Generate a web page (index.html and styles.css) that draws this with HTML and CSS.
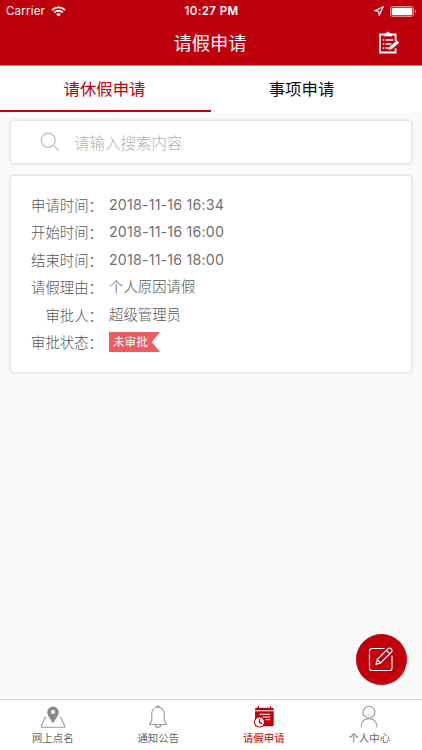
FILE: index.html
```html
<!DOCTYPE html>
<html lang="zh-CN">
<head>
    <meta charset="UTF-8">
    <meta name="viewport" content="width=device-width, initial-scale=1.0">
    <title>请假申请</title>
    <link rel="stylesheet" href="styles.css">
</head>
<body>
    <header class="header">
        <div class="status-bar">
            <div class="status-left">
                <span class="carrier">Carrier</span>
                <svg class="wifi" width="15" height="11" viewBox="0 0 15 11" fill="none" stroke="#fff" stroke-width="1.9">
                    <path d="M1 4.1a9.2 9.2 0 0 1 13 0M3.3 6.5a6 6 0 0 1 8.4 0"/>
                    <path d="M7.5 10.6L5.2 8.3a3.3 3.3 0 0 1 4.6 0z" fill="#fff" stroke="none"/>
                </svg>
            </div>
            <div class="status-time">10:27 PM</div>
            <div class="status-right">
                <svg width="10" height="10" viewBox="0 0 10 10" fill="none" stroke="#fff" stroke-width="1.2" stroke-linejoin="round">
                    <path d="M9.2.8L.8 4.7l3.9.6.5 3.9z"/>
                </svg>
                <svg width="27" height="11" viewBox="0 0 27 11">
                    <rect x=".5" y=".5" width="23" height="10" rx="2.4" fill="none" stroke="#e28a8e"/>
                    <rect x="1.7" y="1.7" width="20.6" height="7.6" rx="1.2" fill="#fff"/>
                    <path d="M25 3.7c1.6.6 1.6 3 0 3.6z" fill="#e28a8e"/>
                </svg>
            </div>
        </div>
        <div class="title-bar">
            <h1>请假申请</h1>
            <svg class="title-icon" width="22" height="24" viewBox="0 0 22 24" fill="none" stroke="#fff" stroke-width="1.8">
                <path d="M17.6 10V3.5H2v18h15.6v-4"/>
                <path d="M5.6 5.3V2.6h2.3c.2-2.6 3.7-2.6 3.9 0h2.3v2.7z" fill="#fff" stroke="none"/>
                <path d="M4.7 9h1.6M7.6 9h7.6M4.7 13h1.6M7.6 13h5.7M4.7 17h1.6M7.6 17h3.2" stroke-width="1.6"/>
                <path d="M10.8 18.8l1-3.2 7.3-6.1 2 2.2-7.2 6.2z" fill="#fff" stroke="none"/>
            </svg>
        </div>
    </header>

    <div class="tabs">
        <div class="tab active">请休假申请</div>
        <div class="tab">事项申请</div>
    </div>

    <main class="content">
        <div class="search">
            <svg width="20" height="20" viewBox="0 0 20 20" fill="none" stroke="#c4c4c6" stroke-width="1.4" stroke-linecap="round">
                <circle cx="8.2" cy="8.2" r="7"/>
                <path d="M13.3 13.3l5 4.8"/>
            </svg>
            <span>请输入搜索内容</span>
        </div>

        <div class="card">
            <div class="row"><span class="label">申请时间：</span><span class="value date">2018-11-16 16:34</span></div>
            <div class="row"><span class="label">开始时间：</span><span class="value date">2018-11-16 16:00</span></div>
            <div class="row"><span class="label">结束时间：</span><span class="value date">2018-11-16 18:00</span></div>
            <div class="row"><span class="label">请假理由：</span><span class="value">个人原因请假</span></div>
            <div class="row"><span class="label">审批人：</span><span class="value">超级管理员</span></div>
            <div class="row"><span class="label">审批状态：</span><span class="tag">未审批</span></div>
        </div>
    </main>

    <div class="fab">
        <svg width="26" height="26" viewBox="0 0 26 26" fill="none" stroke="#fff" stroke-width="1.2" stroke-linecap="round" stroke-linejoin="round">
            <path d="M16 2.500H4A2.500 2.500 0 0 0 1.500 5V22A2.500 2.500 0 0 0 4 24.500h17.500A2.500 2.500 0 0 0 24 22V10"/>
            <path d="M8 18.300l1.200-4.600L20.300 2.500c2.100-1.500 4.800 1.200 3.300 3.300L12.500 17z"/>
            <path d="M18.500 4.300l3.300 3.300M9.200 13.700l3.300 3.300"/>
        </svg>
    </div>

    <nav class="nav">
        <div class="nav-item">
            <svg width="26" height="24" viewBox="0 0 26 24" fill="none">
                <path d="M6.500 12.500H5L1.300 21c-.3.8 0 1.300.8 1.300h21.800c.8 0 1.100-.5.800-1.300L21 12.500h-1.500" stroke="#999" stroke-width="1.100"/>
                <path d="M13 1.500a5.700 5.700 0 0 0-5.700 5.700c0 4 3.700 6.800 5.700 11.300 2-4.500 5.700-7.300 5.700-11.300A5.700 5.700 0 0 0 13 1.500zm0 3.400a2.100 2.100 0 1 1 0 4.200 2.100 2.100 0 0 1 0-4.200z" fill="#888" fill-rule="evenodd"/>
            </svg>
            <span>网上点名</span>
        </div>
        <div class="nav-item">
            <svg width="20" height="24" viewBox="0 0 20 24" fill="none" stroke="#999" stroke-width="1.100" stroke-linejoin="round">
                <path d="M8.500 2.300a1.500 1.500 0 1 1 3 0M10 2.200c-3.700 0-6.200 2.700-6.200 6.500v6.500c0 1.700-2.300 2.500-2.300 4.300h17c0-1.800-2.300-2.600-2.300-4.300V8.700c0-3.800-2.500-6.500-6.200-6.500zM7.300 19.700a2.700 2.700 0 0 0 5.400 0"/>
            </svg>
            <span>通知公告</span>
        </div>
        <div class="nav-item active">
            <svg width="22" height="24" viewBox="0 0 22 24">
                <path d="M3.500 2.700h15.700a1.500 1.500 0 0 1 1.500 1.500v15.600a1.500 1.500 0 0 1-1.500 1.500H2V4.200a1.500 1.500 0 0 1 1.500-1.500z" fill="#c2000b"/>
                <path d="M5.500 1v4M17.500 1v4" stroke="#c2000b" stroke-width="1.200"/>
                <path d="M2 5.800h18.700M6.500 9.300h10.700M9.500 12h7.700M12.500 14.700h4.700" stroke="#fff" stroke-width="1"/>
                <circle cx="6.500" cy="17" r="5" fill="#fff" stroke="#c2000b" stroke-width="1.100"/>
                <path d="M6.500 14v3.300l2.400 1.300" fill="none" stroke="#c2000b" stroke-width="1.300"/>
            </svg>
            <span>请假申请</span>
        </div>
        <div class="nav-item">
            <svg width="20" height="24" viewBox="0 0 20 24" fill="none" stroke="#999" stroke-width="1.100">
                <circle cx="10" cy="7.200" r="5.900"/>
                <path d="M2 22.500c.2-5.700 3.300-8.700 8-8.700s7.800 3 8 8.700"/>
                <path d="M7 9.500c1.800 1.300 4.200 1.300 6 0" stroke="#ccc" stroke-width=".8"/>
            </svg>
            <span>个人中心</span>
        </div>
    </nav>
</body>
</html>
```
FILE: styles.css
```css
* {
    box-sizing: border-box;
}
body {
    margin: 0;
    height: 750px;
    display: flex;
    flex-direction: column;
    position: relative;
    overflow: hidden;
    background: #fafafa;
    font-family: Inter, "Noto Sans CJK SC", sans-serif;
    font-weight: 300;
}
svg {
    display: block;
    flex: none;
}
.header {
    height: 66px;
    background: #bd000b;
    color: #fff;
    border-bottom: 1px solid #d9777c;
}
.status-bar {
    display: grid;
    grid-template-columns: 1fr auto 1fr;
    align-items: center;
    height: 21px;
    padding: 1px 5px 0 6px;
    font-size: 11.5px;
}
.status-left,
.status-right {
    display: flex;
    align-items: center;
    gap: 6px;
}
.carrier {
    font-weight: 400;
    letter-spacing: 0.2px;
}
.status-right {
    justify-content: flex-end;
}
.status-time {
    font-weight: 600;
    font-size: 11.5px;
    letter-spacing: 0.4px;
}
.title-bar {
    display: grid;
    grid-template-columns: 1fr auto 1fr;
    align-items: center;
    height: 44px;
    padding-right: 22px;
}
.title-bar h1 {
    grid-column: 2;
    margin: 0 -20px 0 0;
    font-size: 18.3px;
    font-weight: 400;
    line-height: 44px;
}
.title-icon {
    justify-self: end;
}
.tabs {
    display: flex;
    height: 46px;
    background: #fff;
}
.tab {
    width: 50%;
    padding-right: 2px;
    text-align: center;
    font-size: 16.4px;
    font-weight: 400;
    line-height: 46px;
    color: #111;
}
.tab:last-child {
    padding-right: 30px;
}
.tab.active {
    color: #bd000b;
    border-bottom: 2px solid #bd000b;
}
.content {
    flex: 1;
    padding: 8px 10px;
}
.search,
.card {
    background: #fff;
    border: 1px solid #e8e8e8;
    border-radius: 4px;
    box-shadow: 0 0 3px rgba(0, 0, 0, 0.14);
}
.search {
    display: flex;
    align-items: center;
    gap: 14px;
    height: 44px;
    padding: 0 0 1px 29px;
    font-size: 15.5px;
    color: #b2b2b6;
}
.card {
    height: 198px;
    margin-top: 11px;
    padding: 16px 20px;
    color: #555;
    font-size: 14.4px;
}
.row {
    display: flex;
    height: 27.4px;
    line-height: 27.4px;
}
.label {
    width: 72px;
    margin-right: 6px;
    text-align: right;
    white-space: nowrap;
}
.value {
    margin-top: -1px;
}
.date {
    font-size: 14.2px;
    font-weight: 400;
    color: #707070;
    letter-spacing: 0.2px;
}
.tag {
    width: 51px;
    height: 20px;
    margin-top: 3px;
    padding-left: 4px;
    background: #f05b60;
    clip-path: polygon(0 0, 100% 0, 84% 50%, 100% 100%, 0 100%);
    color: #fff;
    font-size: 11.6px;
    font-weight: 400;
    line-height: 20px;
}
/* floating button for a new application */
.fab {
    position: absolute;
    right: 15.5px;
    bottom: 65.5px;
    width: 51px;
    height: 51px;
    display: flex;
    align-items: center;
    justify-content: center;
    border-radius: 50%;
    background: #c2000b;
}
.nav {
    display: flex;
    height: 51px;
    background: #fff;
    border-top: 1px solid #d8d8d8;
}
.nav-item {
    flex: 1;
    display: flex;
    flex-direction: column;
    align-items: center;
    padding-top: 5px;
    font-size: 10.4px;
    font-weight: 400;
    line-height: 20px;
    color: #666;
}
.nav-item.active {
    color: #c2000b;
}
```
